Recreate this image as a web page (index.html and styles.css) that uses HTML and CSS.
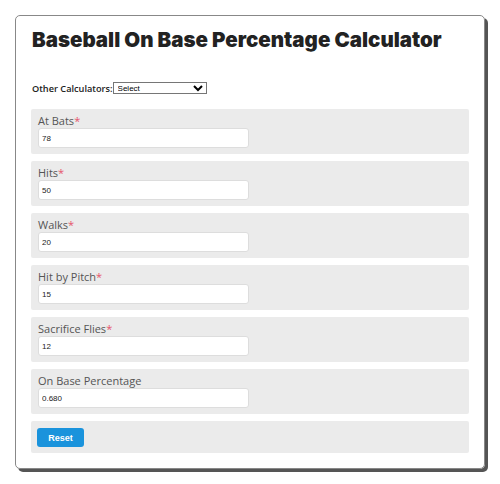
FILE: index.html
```html
<!DOCTYPE html>
<html lang="en">

<head>
    <meta charset="UTF-8">
    <meta name="viewport" content="width=device-width, initial-scale=1.0">
    <title>Baseball On Base Percentage Calculator</title>
    <link rel="stylesheet" href="styles.css">
</head>

<body>
    <div class="card">
        <h1>Baseball On Base Percentage Calculator</h1>

        <!-- Selector de calculadoras -->
        <div class="other">
            <label for="otherCalc">Other Calculators:</label>
            <select id="otherCalc">
                <option>Select</option>
            </select>
        </div>

        <!-- Campos -->
        <div class="field">
            <label>At Bats<span class="req">*</span></label>
            <input type="text" value="78">
        </div>
        <div class="field">
            <label>Hits<span class="req">*</span></label>
            <input type="text" value="50">
        </div>
        <div class="field">
            <label>Walks<span class="req">*</span></label>
            <input type="text" value="20">
        </div>
        <div class="field">
            <label>Hit by Pitch<span class="req">*</span></label>
            <input type="text" value="15">
        </div>
        <div class="field">
            <label>Sacrifice Flies<span class="req">*</span></label>
            <input type="text" value="12">
        </div>
        <div class="field">
            <label>On Base Percentage</label>
            <input type="text" value="0.680">
        </div>
        <div class="field actions">
            <button type="reset">Reset</button>
        </div>
    </div>
</body>

</html>
```

FILE: styles.css
```css
/* Estilo general */
body {
    margin: 0;
    padding: 15px;
    background-color: #fff;
    font-family: "Open Sans", Arial, sans-serif;
}

.card {
    width: 438px;
    padding: 0 15px 15px 15px;
    border: 1px solid #888;
    border-radius: 5px;
    box-shadow: 3px 3px 0 #555;
    display: flex;
    flex-direction: column;
    gap: 7px;
}

h1 {
    margin: 11px 0 0 1px;
    font-family: Inter, "DejaVu Sans", sans-serif;
    font-weight: 900;
    font-size: 20.5px;
    line-height: 26px;
    color: #222;
}

.other {
    display: flex;
    align-items: center;
    height: 12px;
    margin: 22px 0 8px 1px;
    font-size: 9.2px;
    font-weight: 600;
    color: #222;
}

.other select {
    width: 94px;
    height: 12px;
    padding: 0;
    font-family: Arial, sans-serif;
    font-size: 8px;
    border: 1px solid #767676;
    border-radius: 0;
    background-color: #fff;
}

.field {
    background-color: #ebebeb;
    border-radius: 2px;
    padding: 4px 7px 6px 7px;
    display: flex;
    flex-direction: column;
    align-items: flex-start;
}

.field label {
    font-size: 11px;
    line-height: 15px;
    color: #555;
}

.req {
    color: #e5556a;
}

.field input {
    width: 211px;
    height: 20px;
    box-sizing: border-box;
    border: 1px solid #ddd;
    border-radius: 3px;
    padding: 0 3px;
    font-family: Arial, sans-serif;
    font-size: 8px;
    color: #222;
    background-color: #fff;
}

.actions {
    padding: 7px 6px 6px 6px;
}

.actions button {
    width: 47px;
    height: 19px;
    border: none;
    border-radius: 3px;
    background-color: #1a93dc;
    color: #fff;
    font-family: Arial, sans-serif;
    font-weight: bold;
    font-size: 9px;
    cursor: pointer;
}
```
